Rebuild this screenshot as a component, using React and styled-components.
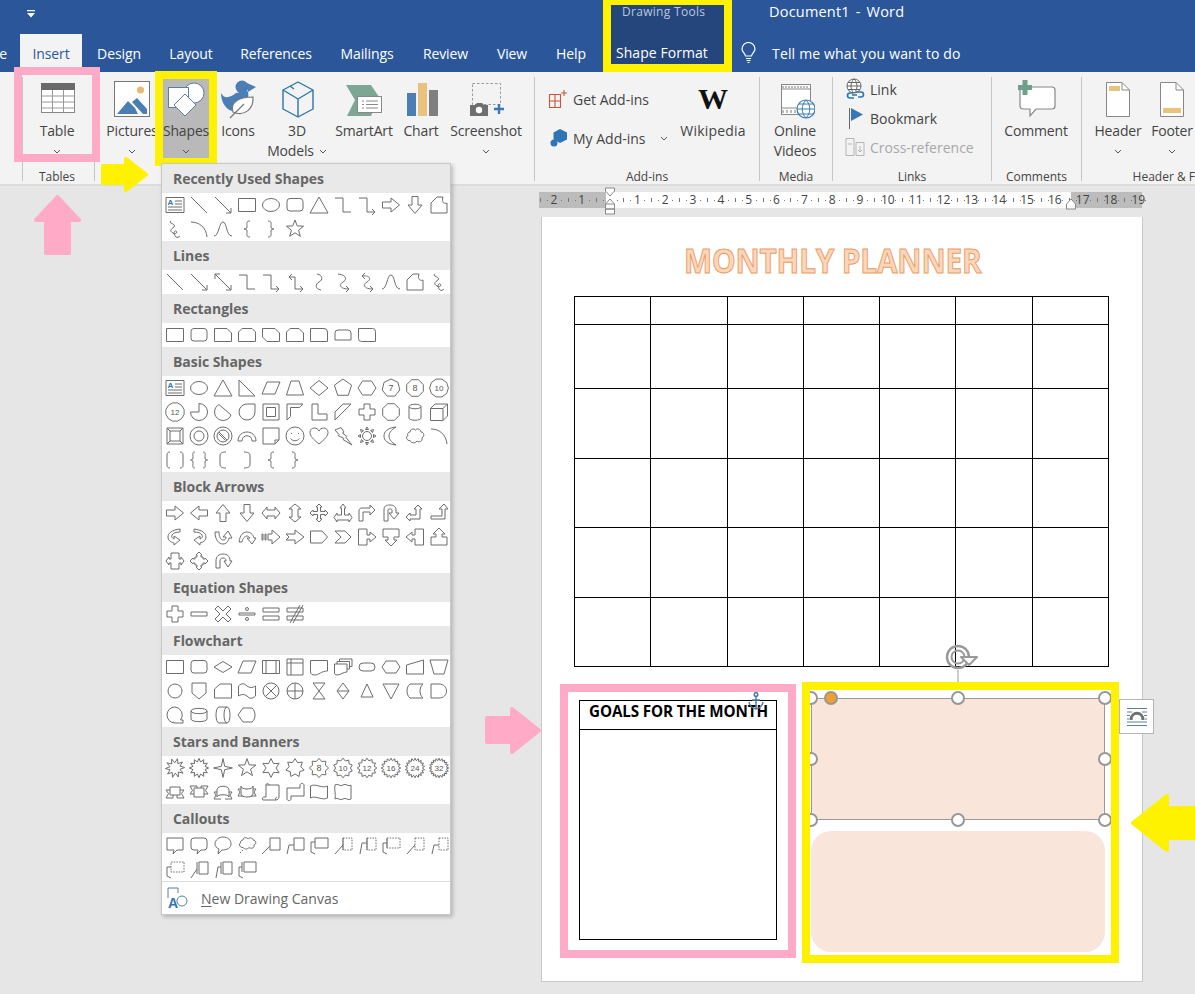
import React from "react";
import styled, { createGlobalStyle } from "styled-components";

const FONT = `"Open Sans", "Noto Sans", "Liberation Sans", sans-serif`;
const YELLOW = "#fff200";
const PINK = "#ffabc7";

const GlobalStyle = createGlobalStyle`
  html, body { margin: 0; padding: 0; background: #e6e6e6; }
  body { font-family: ${FONT}; }
`;

/* shapes gallery paths, all in a 20x20 box */
const poly = (n, r = 8.5, rot = -90) => {
  const pts = [];
  for (let i = 0; i < n; i++) {
    const a = ((rot + (360 / n) * i) * Math.PI) / 180;
    pts.push(`${(10 + r * Math.cos(a)).toFixed(1)} ${(10 + r * Math.sin(a)).toFixed(1)}`);
  }
  return `M${pts.join("L")}Z`;
};
const burst = (n, R = 9, r = 5.5, rot = -90) => {
  const pts = [];
  for (let i = 0; i < n * 2; i++) {
    const a = ((rot + (180 / n) * i) * Math.PI) / 180;
    const q = i % 2 ? r : R;
    pts.push(`${(10 + q * Math.cos(a)).toFixed(1)} ${(10 + q * Math.sin(a)).toFixed(1)}`);
  }
  return `M${pts.join("L")}Z`;
};

const S = {
  textbox: { d: "M1 2.5H19V17.5H1ZM10 6H17M10 9H17M3 12H17M3 15H17", t: "A", blue: true },
  line: "M2 2L18 18",
  arrow: "M2 2L18 18M18 18V13M18 18H13",
  darrow: "M2 2L18 18M18 18V13M18 18H13M2 2V7M2 2H7",
  rect: "M1.5 3.5H18.5V16.5H1.5Z",
  round: "M5 3.5H15a3 3 0 0 1 3 3V13a3 3 0 0 1-3 3H5a3 3 0 0 1-3-3V6.5a3 3 0 0 1 3-3Z",
  ellipse: "M1.5 10a8.5 6.5 0 1 0 17 0a8.5 6.5 0 1 0-17 0Z",
  tri: "M10 2L19 18H1Z",
  elbow: "M2 3H10V17H18",
  elbowA: "M2 3H10V17H18M18 17l-3-3M18 17l-3 3",
  elbowD: "M4 5H10V17H18M18 17l-3-3M18 17l-3 3M4 5l3-3M4 5l3 3",
  right: "M1.5 7H10V3L18.5 10L10 17V13H1.5Z",
  left: "M18.5 7H10V3L1.5 10L10 17V13H18.5Z",
  up: "M7 18.5V10H3L10 1.5L17 10H13V18.5Z",
  down: "M7 1.5H13V10H17L10 18.5L3 10H7Z",
  free: "M2 18V8L8 2H14C12 8 16 9 18 8V18Z",
  scrib: "M6 2C2 4 12 5 9 8C6 10 4 12 8 14C11 16 13 13 11 12C9 11 8 15 11 18C12 19 14 18 15 17",
  arc: "M2 3C10 3 17 8 18 18",
  curve: "M1 17C6 17 6 3 10 3C14 3 13 17 19 17",
  lbrace: "M13 2C9 2 10 4 10 8C10 10 8 10 7 10C8 10 10 10 10 12C10 16 9 18 13 18",
  rbrace: "M7 2C11 2 10 4 10 8C10 10 12 10 13 10C12 10 10 10 10 12C10 16 11 18 7 18",
  star: burst(5, 9, 3.8),
  curveC: "M8 2C14 3 14 8 10 10C6 12 6 17 12 18",
  curveCA: "M5 2C14 3 14 8 10 10C6 12 6 17 16 17M16 17l-3-3M16 17l-3 3",
  curveCD: "M5 4C14 3 14 8 10 10C6 12 6 17 16 17M16 17l-3-3M16 17l-3 3M5 4l3-3M5 4l3 3",
  snip1: "M1.5 3.5H14L18.5 8V16.5H1.5Z",
  snip2: "M5 3.5H15L18.5 7V16.5H1.5V7Z",
  snip3: "M1.5 3.5H14L18.5 8V16.5H6L1.5 12Z",
  snipr: "M5 3.5H14L18.5 8V16.5H1.5V7Z",
  rnd1: "M1.5 3.5H15a3.5 3.5 0 0 1 3.5 3.5V16.5H1.5Z",
  rnd2: "M5 5H15a3 3 0 0 1 3 3V15H2V8a3 3 0 0 1 3-3Z",
  rnd3: "M1.5 3.5H15.5a3 3 0 0 1 3 3V16.5H4.5a3 3 0 0 1-3-3Z",
  rtri: "M2 2L18 18H2Z",
  para: "M6 4H19L14 16H1Z",
  trap: "M6 3H14L18.5 17H1.5Z",
  dia: "M10 2.5L19 10L10 17.5L1 10Z",
  hex: "M5.5 3H14.5L19 10L14.5 17H5.5L1 10Z",
  pie: "M10 10V1.5a8.5 8.5 0 1 1-8.5 8.5Z",
  chord: "M6 2.5A8.5 8.5 0 1 0 18 13Z",
  drop: "M18 2V10a8 8 0 1 1-8-8Z",
  frame: "M2 2H18V18H2ZM5.5 5.5V14.5H14.5V5.5Z",
  half: "M2 2H18L14.5 5.5H5.5V14.5L2 18Z",
  ell: "M3 2H9V12H18V18H3Z",
  stripe: "M2 18V10L10 2H18Z",
  cross: "M7 2H13V7H18V13H13V18H7V13H2V7H7Z",
  can: "M4 4.5C4 1.5 16 1.5 16 4.5V16C16 19 4 19 4 16ZM4 4.5C4 7.5 16 7.5 16 4.5",
  cube: "M1.5 6.5L6 2H18.5V14L14 18.5H1.5ZM1.5 6.5H14V18.5M14 6.5L18.5 2",
  bevel: "M2 2H18V18H2ZM5 5H15V15H5ZM2 2L5 5M18 2L15 5M2 18L5 15M18 18L15 15",
  donut: "M1 10a9 9 0 1 0 18 0a9 9 0 1 0-18 0ZM5 10a5 5 0 1 0 10 0a5 5 0 1 0-10 0Z",
  nosym: "M1 10a9 9 0 1 0 18 0a9 9 0 1 0-18 0ZM4 10a6 6 0 1 0 12 0a6 6 0 1 0-12 0ZM6 6L14 14M5.5 7.5L12.5 14.5",
  barc: "M1 15C1 3 19 3 19 15H15C15 8 5 8 5 15Z",
  fold: "M2 2H18V14L14 18H2ZM18 14L14 14V18",
  smile: "M1 10a9 9 0 1 0 18 0a9 9 0 1 0-18 0ZM6 7.5h1M13 7.5h1M5.5 12.5C8 15.5 12 15.5 14.5 12.5",
  heart: "M10 18C4 13 1 10 1 6.5C1 3.5 3 2 5.5 2C7.5 2 9 3 10 5C11 3 12.5 2 14.5 2C17 2 19 3.5 19 6.5C19 10 16 13 10 18Z",
  bolt: "M2 4L8 1.5L11 6L9.5 7L14 10.5L13 11.5L19 19L10 13.5L11 12.5L5 9.5L6 8.5Z",
  sun: "M5.5 10a4.5 4.5 0 1 0 9 0a4.5 4.5 0 1 0-9 0ZM10 1L8.5 3.5H11.5ZM10 19L8.5 16.5H11.5ZM1 10L3.5 8.5V11.5ZM19 10L16.5 8.5V11.5ZM3.5 3.5L6.5 4.5L4.5 6.5ZM16.5 3.5L13.5 4.5L15.5 6.5ZM3.5 16.5L6.5 15.5L4.5 13.5ZM16.5 16.5L13.5 15.5L15.5 13.5Z",
  moon: "M15 1C6 2 3 6 3 10C3 14 6 18 15 19C10 16 8 13 8 10C8 7 10 4 15 1Z",
  cloud: "M5 6C5 3 9 2 10.5 4C12 2 16 3 16 6C19 6 20 10 17 12C18 15 14 17 12 15C10 18 6 17 5 14.5C2 15 0 11 3 9.5C2 8 3 6 5 6Z",
  dbrk: "M5 2C3 2 2 3 2 5V15C2 17 3 18 5 18M15 2C17 2 18 3 18 5V15C18 17 17 18 15 18",
  dbrc: "M6 2C3 2 4 4 4 8C4 10 2 10 1.5 10C2 10 4 10 4 12C4 16 3 18 6 18M14 2C17 2 16 4 16 8C16 10 18 10 18.5 10C18 10 16 10 16 12C16 16 17 18 14 18",
  lbrk: "M13 2C9 2 7 3 7 6V14C7 17 9 18 13 18",
  rbrk: "M7 2C11 2 13 3 13 6V14C13 17 11 18 7 18",
  lr: "M1 10L6 4V7H14V4L19 10L14 16V13H6V16Z",
  ud: "M10 1L16 6H13V14H16L10 19L4 14H7V6H4Z",
  quad: "M10 1L13 4H11.5V8.5H16V7L19 10L16 13V11.5H11.5V16H13L10 19L7 16H8.5V11.5H4V13L1 10L4 7V8.5H8.5V4H7Z",
  lru: "M10 1L13 5H11.5V12H16V10L19 14.5L16 19V17H4V19L1 14.5L4 10V12H8.5V5H7Z",
  bent: "M2 18V8C2 6 3 5 5 5H13V2L18 7L13 12V9H6V18Z",
  uturn: "M3 18V7C3 3 5 2 9 2C13 2 15 4 15 7V10H18L13 16L8 10H11V7C11 6 10 6 9 6C8 6 7 6 7 7V18Z",
  leftup: "M1 14L5 10V12H11V6H9L13 2L17 6H15V16H5V18Z",
  bentup: "M2 13H13V6H10L15 1L19 6H16V16H2Z",
  curveR: "M15 2C7 3 3 6 3 10C3 13 5 15 9 16V18L15 13L9 9V12C7 11 6 10 7 8C8 6 11 5 15 5Z",
  curveL: "M5 2C13 3 17 6 17 10C17 13 15 15 11 16V18L5 13L11 9V12C13 11 14 10 13 8C12 6 9 5 5 5Z",
  curveU: "M2 5C2 13 6 17 10 17C13 17 15 15 16 11H19L15 4L10 10H13C13 12 12 13 10 13C8 13 6 10 6 5Z",
  curveD: "M2 15C3 8 6 5 10 5C13 5 16 7 17 11H19L15 17L10 11H13C12 10 11 9 10 9C8 9 6 11 5 15Z",
  striped: "M1 7H2V13H1ZM4 7H5V13H4ZM7 7H11V3L19 10L11 17V13H7Z",
  notch: "M1 7H10V3L19 10L10 17V13H1L4 10Z",
  pent: "M1.5 4H13L18.5 10L13 16H1.5Z",
  chev: "M2 4H12L18 10L12 16H2L8 10Z",
  rcall: "M1.5 2H10V8H13V5L19 10L13 15V12H10V18H1.5Z",
  dcall: "M2 2H18V10H13V13H16L10 19L4 13H7V10H2Z",
  lcall: "M18.5 2H10V8H7V5L1 10L7 15V12H10V18H18.5Z",
  ucall: "M2 18H18V10H13V7H16L10 1L4 7H7V10H2Z",
  lrcall: "M6 2H14V8H16V6L19 10L16 14V12H14V18H6V12H4V14L1 10L4 6V8H6Z",
  qcall: "M6 6H8V4H7L10 1L13 4H12V6H14V8H16V7L19 10L16 13V12H14V14H12V16H13L10 19L7 16H8V14H6V12H4V13L1 10L4 7V8H6Z",
  circ: "M3 17V10C3 5 6 3 10 3C14 3 17 5 17 10H19L15 16L11 10H13C13 8 12 7 10 7C8 7 7 8 7 10V17Z",
  minus: "M2 8H18V12H2Z",
  times: "M5 2L10 7L15 2L18 5L13 10L18 15L15 18L10 13L5 18L2 15L7 10L2 5Z",
  divide: "M2 9H18V11H2ZM8.5 5a1.5 1.5 0 1 0 3 0a1.5 1.5 0 1 0-3 0ZM8.5 15a1.5 1.5 0 1 0 3 0a1.5 1.5 0 1 0-3 0Z",
  equal: "M2 4H18V8H2ZM2 12H18V16H2Z",
  noteq: "M2 4H18V8H2ZM2 12H18V16H2ZM15 1L5 19M18 1L8 19",
  fdec: "M1 10L10 4.5L19 10L10 15.5Z",
  fpre: "M1.5 3.5H18.5V16.5H1.5ZM5 3.5V16.5M15 3.5V16.5",
  fint: "M2 2H18V18H2ZM6 2V18M2 6H18",
  fdoc: "M1.5 3.5H18.5V14C12 14 10 18 6 18C3 18 1.5 17 1.5 15Z",
  fmul: "M1.5 7H14V15C10 15 8 18 4 18C2.5 18 1.5 17 1.5 16ZM4 7V4.5H16.5V12H14M6.5 4.5V2H19V9.5H16.5",
  fter: "M6 6H14a4 4 0 0 1 0 8H6a4 4 0 0 1 0-8Z",
  fprep: "M5 4H15L19 10L15 16H5L1 10Z",
  fman: "M1.5 8L18.5 3V17H1.5Z",
  fop: "M1 3H19L15 17H5Z",
  fcon: "M3 10a7 7 0 1 0 14 0a7 7 0 1 0-14 0Z",
  foff: "M3 2H17V12L10 18L3 12Z",
  fcard: "M7 3H18.5V17H1.5V8Z",
  ftape: "M1.5 5C5 2 7 2 10 5C13 7 15 7 18.5 5V15C15 18 13 18 10 15C7 13 5 13 1.5 15Z",
  fsum: "M2 10a8 8 0 1 0 16 0a8 8 0 1 0-16 0ZM4.5 4.5L15.5 15.5M15.5 4.5L4.5 15.5",
  for: "M2 10a8 8 0 1 0 16 0a8 8 0 1 0-16 0ZM10 2V18M2 10H18",
  fcol: "M4 2H16L4 18H16Z",
  fsort: "M10 2L16 10L10 18L4 10ZM4 10H16",
  fext: "M10 3L16 16H4Z",
  fmer: "M2 3H18L10 18Z",
  fsto: "M5 3H18C14 6 14 14 18 17H5C1 14 1 6 5 3Z",
  fdel: "M2 3H10C20 3 20 17 10 17H2Z",
  fseq: "M10 2a8 8 0 1 0 0 16H18V15H15.5A8 8 0 0 0 10 2Z",
  fmag: "M2 6C2 2.5 18 2.5 18 6V14C18 17.5 2 17.5 2 14ZM2 6C2 9.5 18 9.5 18 6",
  fdir: "M6 2H14C18 2 18 18 14 18H6C2 18 2 2 6 2ZM14 2C10 2 10 18 14 18",
  fdis: "M6 3H15C19 6 19 14 15 17H6L1 10Z",
  rib1: "M5 5H15V13H5ZM5 8H1L3.5 11.5L1 16H8V13M15 8H19L16.5 11.5L19 16H12V13",
  rib2: "M5 6H15V15H5ZM5 12H1L3.5 8.5L1 4H8V6M15 12H19L16.5 8.5L19 4H12V6",
  rib3: "M4 8C4 3 16 3 16 8V15C16 12 4 12 4 15ZM4 10H1L3 13L1 17H8M16 10H19L17 13L19 17H12",
  rib4: "M4 4C4 8 16 8 16 4V12C16 16 4 16 4 12ZM4 7H1L3 10L1 14H6M16 7H19L17 10L19 14H14",
  scrV: "M5 3H18V15C18 17 16 18 15 18H2C1 18 1 15 3 15H5ZM5 3C5 1 8 1 8 3V3M15 18C14 17 15 15 16 15",
  scrH: "M2 6H15V3C15 1 19 1 19 3V14H6V17C6 19 2 19 2 17Z",
  wave: "M1.5 4C7 1 13 7 18.5 4V16C13 19 7 13 1.5 16Z",
  dwave: "M2 3C5 1 7 5 10 3C13 1 15 5 18 3L18 17C15 19 13 15 10 17C7 19 5 15 2 17C3 12 1 8 2 3Z",
  cRect: "M2 3H18V15H12L8 19L9 15H2Z",
  cRnd: "M5 3H15a3 3 0 0 1 3 3V12a3 3 0 0 1-3 3H12L8 19L9 15H5a3 3 0 0 1-3-3V6a3 3 0 0 1 3-3Z",
  cOval: "M2 9C2 5 6 2 10 2C15 2 18 5 18 9C18 13 14 15 9 15L5 19L6 14C3.5 13 2 11 2 9Z",
  cCloud: "M6 5C6 2 10 2 11 4C13 2 16 3 16 5C19 5 20 9 17 10C18 13 14 14 12 12.5C10 15 7 14 6 12.5C3 13 1 9 3.5 8C3 6 5 5 6 5ZM5 15.5h1M3 17.5h1",
  l1: "M9 3H19V15H9ZM9 11L1 19",
  l2: "M9 3H19V15H9ZM9 10H4L2 19",
  l3: "M6 3H19V13H6ZM2 7H6M2 7V17L6 19",
  a1: { d: "M10 10L2 19M10 3V15", dash: "M10 3H19V15H10Z" },
  a2: { d: "M10 8H5L3 19M10 3V15", dash: "M10 3H19V15H10Z" },
  a3: { d: "M6 3V13M2 8H6M2 8V17L6 19", dash: "M6 3H19V13H6Z" },
  b1: { d: "M10 10L2 19", dash: "M10 3H19V15H10Z" },
  b2: { d: "M10 10H5L3 19", dash: "M10 3H19V15H10Z" },
  b3: { d: "M6 8H2V17L6 19", dash: "M6 3H19V13H6Z" },
  c1: "M10 3H19V15H10ZM8 3V15M8 10L2 19",
  c2: "M10 3H19V15H10ZM8 3V15M8 8H5L3 19",
  c3: "M7 3H19V13H7ZM5 3V13M5 8H2V17L6 19",
};

const withNum = (d, t) => ({ d, t });
const poly7 = withNum(poly(7, 9), "7");
const poly8 = withNum(poly(8, 9, -67.5), "8");
const poly10 = withNum(poly(10, 9.4, -72), "10");
const poly12 = withNum(poly(12, 9.4, -75), "12");

const SECTIONS = [
  {
    title: "Recently Used Shapes",
    shapes: [S.textbox, S.line, S.arrow, S.rect, S.ellipse, S.round, S.tri, S.elbow, S.elbowA, S.right, S.down, S.free, S.scrib, S.arc, S.curve, S.lbrace, S.rbrace, S.star],
  },
  {
    title: "Lines",
    shapes: [S.line, S.arrow, S.darrow, S.elbow, S.elbowA, S.elbowD, S.curveC, S.curveCA, S.curveCD, S.curve, S.free, S.scrib],
  },
  {
    title: "Rectangles",
    shapes: [S.rect, S.round, S.snip1, S.snip2, S.snip3, S.snipr, S.rnd1, S.rnd2, S.rnd3],
  },
  {
    title: "Basic Shapes",
    shapes: [
      S.textbox, S.ellipse, S.tri, S.rtri, S.para, S.trap, S.dia, poly(5, 9), S.hex, poly7, poly8, poly10,
      poly12, S.pie, S.chord, S.drop, S.frame, S.half, S.ell, S.stripe, S.cross, poly(8, 9, -67.5), S.can, S.cube,
      S.bevel, S.donut, S.nosym, S.barc, S.fold, S.smile, S.heart, S.bolt, S.sun, S.moon, S.cloud, S.arc,
      S.dbrk, S.dbrc, S.lbrk, S.rbrk, S.lbrace, S.rbrace,
    ],
  },
  {
    title: "Block Arrows",
    shapes: [
      S.right, S.left, S.up, S.down, S.lr, S.ud, S.quad, S.lru, S.bent, S.uturn, S.leftup, S.bentup,
      S.curveR, S.curveL, S.curveU, S.curveD, S.striped, S.notch, S.pent, S.chev, S.rcall, S.dcall, S.lcall, S.ucall,
      S.lrcall, S.qcall, S.circ,
    ],
  },
  {
    title: "Equation Shapes",
    shapes: [S.cross, S.minus, S.times, S.divide, S.equal, S.noteq],
  },
  {
    title: "Flowchart",
    shapes: [
      S.rect, S.round, S.fdec, S.para, S.fpre, S.fint, S.fdoc, S.fmul, S.fter, S.fprep, S.fman, S.fop,
      S.fcon, S.foff, S.fcard, S.ftape, S.fsum, S.for, S.fcol, S.fsort, S.fext, S.fmer, S.fsto, S.fdel,
      S.fseq, S.fmag, S.fdir, S.fdis,
    ],
  },
  {
    title: "Stars and Banners",
    shapes: [
      burst(10, 9.6, 5.2, -75), burst(12, 9.6, 6.2), burst(4, 9.4, 2.4), burst(5, 9.4, 3.8), burst(6, 9.4, 5), burst(7, 9.4, 6),
      { d: burst(8, 9.6, 7), t: "8" }, { d: burst(10, 9.8, 7.4), t: "10" }, { d: burst(12, 9.8, 7.4), t: "12" }, { d: burst(16, 9.8, 7.4), t: "16" }, { d: burst(18, 9.8, 7.4), t: "24" }, { d: burst(20, 9.8, 7.4), t: "32" },
      S.rib1, S.rib2, S.rib3, S.rib4, S.scrV, S.scrH, S.wave, S.dwave,
    ],
  },
  {
    title: "Callouts",
    shapes: [S.cRect, S.cRnd, S.cOval, S.cCloud, S.l1, S.l2, S.l3, S.a1, S.a2, S.a3, S.b1, S.b2, S.b3, S.c1, S.c2, S.c3],
  },
];

const TABLE_ROWS = [28, 64, 70, 69, 70, 69];
const TABS = [
  { label: "Insert", w: 62, active: true },
  { label: "Design", w: 74 },
  { label: "Layout", w: 70 },
  { label: "References", w: 100 },
  { label: "Mailings", w: 82 },
  { label: "Review", w: 75 },
  { label: "View", w: 58 },
  { label: "Help", w: 60 },
];
const RULER = [2, 1, "", 1, 2, 3, 4, 5, 6, 7, 8, 9, 10, 11, 12, 13, 14, 15, 16, 17, 18, 19];

const Window = styled.div`
  position: relative;
  width: 1195px;
  height: 994px;
  overflow: hidden;
  display: flex;
  flex-direction: column;
  background: #e6e6e6;
  color: #444;
`;

const TitleBar = styled.header`
  height: 72px;
  flex: none;
  display: flex;
  background: #2b579a;
  color: #fff;
`;

const TitleLeft = styled.div`
  width: 603px;
  flex: none;
`;

const QuickRow = styled.div`
  height: 34px;
  display: flex;
  align-items: flex-start;
  padding: 10px 0 0 27px;
  box-sizing: border-box;
`;

const TabRow = styled.nav`
  height: 38px;
  display: flex;
`;

const Tab = styled.div`
  width: ${(p) => p.$w}px;
  display: flex;
  align-items: center;
  justify-content: center;
  font-size: 14px;
  letter-spacing: -0.1px;
  white-space: nowrap;
  background: ${(p) => (p.$active ? "#f3f3f3" : "transparent")};
  color: ${(p) => (p.$active ? "#2b579a" : "#fff")};
`;

const ClippedTab = styled(Tab)`
  justify-content: flex-end;
  overflow: hidden;
  padding-right: 13px;
  box-sizing: border-box;
`;

const ContextBand = styled.div`
  width: 129px;
  height: 72px;
  flex: none;
  box-sizing: border-box;
  background: #25467d;
  border: 8px solid ${YELLOW};
  border-top-width: 5px;
  display: flex;
  flex-direction: column;
  justify-content: space-between;
`;

const ContextTitle = styled.span`
  font-size: 12px;
  line-height: 14px;
  margin-left: 11px;
  color: #b9c8de;
  white-space: nowrap;
  letter-spacing: 0.3px;
`;

const ContextTab = styled.span`
  font-size: 14px;
  line-height: 19px;
  margin: 0 0 2px 5px;
  white-space: nowrap;
  letter-spacing: 0.05px;
`;

const TitleRight = styled.div`
  flex: 1;
  display: flex;
  flex-direction: column;
`;

const DocTitle = styled.div`
  height: 34px;
  box-sizing: border-box;
  padding: 2px 0 0 37px;
  font-size: 14.5px;
  line-height: 20px;
  letter-spacing: 0.2px;
  word-spacing: 2px;
`;

const TellMe = styled.div`
  height: 38px;
  display: flex;
  align-items: center;
  gap: 16px;
  padding-left: 9px;
  font-size: 14px;
  letter-spacing: 0.17px;
`;

const Ribbon = styled.section`
  height: 114px;
  flex: none;
  box-sizing: border-box;
  display: flex;
  padding: 5px 0 0 22px;
  background: #f3f3f3;
  border-bottom: 2px solid #dcdcdc;
  overflow: hidden;
`;

const Group = styled.div`
  width: ${(p) => p.$w}px;
  height: 104px;
  flex: none;
  box-sizing: border-box;
  display: flex;
  flex-direction: column;
  border-right: 1px solid #c6c6c6;
  ${(p) => p.$first && "border-left: 1px solid #c6c6c6;"}
  ${(p) => p.$last && "border-right: 0;"}
`;

const GroupBody = styled.div`
  flex: 1;
  display: flex;
  padding: ${(p) => p.$pad || "0"};
`;

const GroupLabel = styled.div`
  height: 10px;
  line-height: 12px;
  text-align: center;
  font-size: 12px;
  color: #444;
  white-space: nowrap;
  padding-right: ${(p) => p.$shift || 0}px;
`;

const BigButton = styled.div`
  width: ${(p) => p.$w}px;
  flex: none;
  display: flex;
  flex-direction: column;
  align-items: center;
  font-size: 14px;
  line-height: 20px;
  letter-spacing: ${(p) => p.$spacing ?? -0.15}px;
  white-space: nowrap;
  ${(p) => p.$pressed && "background: linear-gradient(#b9b9b9, #b9b9b9) 2px 2px / 46px 79px no-repeat;"}
  svg.big {
    display: block;
    margin: 2px 0;
    flex: none;
  }
`;

const ChevronLine = styled.span`
  height: 20px;
  display: flex;
  align-items: center;
  gap: 5px;
`;

const SmallColumn = styled.div`
  display: flex;
  flex-direction: column;
  gap: ${(p) => p.$gap}px;
  padding: ${(p) => p.$pad};
  width: ${(p) => p.$w}px;
  box-sizing: border-box;
  flex: none;
`;

const SmallButton = styled.div`
  height: 24px;
  display: flex;
  align-items: center;
  gap: 5px;
  font-size: 14px;
  white-space: nowrap;
  color: ${(p) => (p.$disabled ? "#a8a8a8" : "#444")};
`;

const SplitChevron = styled.span`
  display: flex;
  margin-left: 9px;
`;

const WikiMark = styled.span`
  height: 44px;
  display: flex;
  align-items: center;
  font-family: "Liberation Serif", serif;
  font-weight: 700;
  font-size: 30px;
  color: #111;
`;

const Workspace = styled.main`
  flex: 1;
  position: relative;
  display: flex;
  flex-direction: column;
`;

const Ruler = styled.div`
  width: 603px;
  height: 16px;
  flex: none;
  margin: 6px 0 0 539px;
  padding-left: 1px;
  box-sizing: border-box;
  display: flex;
  position: relative;
  background: linear-gradient(to right, #bcbcbc 67px, #fff 67px, #fff 532px, #bcbcbc 532px);
`;

const RulerCell = styled.span`
  flex: 0 0 27.83px;
  position: relative;
  text-align: center;
  font-size: 12px;
  line-height: 16px;
  color: #444;
  &::before {
    content: "";
    position: absolute;
    left: 0;
    top: 6px;
    width: 1px;
    height: 4px;
    background: #777;
  }
  &::after {
    content: "";
    position: absolute;
    left: 7px;
    top: 8px;
    width: 1px;
    height: 1px;
    background: #777;
    box-shadow: 14px 0 #777;
  }
`;

const RulerMarks = styled.svg`
  position: absolute;
  left: 0;
  top: -4px;
  overflow: visible;
`;

const DocPage = styled.div`
  width: 602px;
  height: 765px;
  flex: none;
  box-sizing: border-box;
  margin: 9px 0 0 541px;
  position: relative;
  background: #fff;
  border: 1px solid #c9c9c9;
  border-width: 0 1px 1px 1px;
  display: flex;
  flex-direction: column;
`;

const PlannerTitle = styled.h1`
  margin: 27px 0 0 142px;
  width: 298px;
  height: 33px;
  font-size: 34px;
  line-height: 33px;
  font-weight: 700;
  letter-spacing: -0.2px;
  white-space: nowrap;
  color: #fbd6bb;
  -webkit-text-stroke: 1px #ea9c64;
  transform: scaleX(0.876);
  transform-origin: left center;
`;

const Calendar = styled.table`
  margin: 19px 0 0 32px;
  width: 535px;
  flex: none;
  border-collapse: collapse;
  table-layout: fixed;
  td {
    border: 1px solid #000;
    padding: 0;
  }
`;

const CalendarRow = styled.tr`
  height: ${(p) => p.$h}px;
`;

const BottomRow = styled.div`
  display: flex;
  margin: 15px 0 0 18px;
  position: relative;
  align-items: flex-start;
`;

const PinkFrame = styled.div`
  width: 236px;
  height: 274px;
  flex: none;
  box-sizing: border-box;
  margin-top: 2px;
  padding: 8px 11px 0;
  border: 8px solid ${PINK};
  position: relative;
`;

const GoalsTable = styled.div`
  width: 198px;
  height: 240px;
  box-sizing: border-box;
  border: 1px solid #000;
  display: flex;
  flex-direction: column;
`;

const GoalsHead = styled.div`
  height: 29px;
  box-sizing: border-box;
  border-bottom: 1px solid #000;
  font-size: 15.2px;
  font-weight: 700;
  line-height: 21px;
  letter-spacing: -0.1px;
  white-space: nowrap;
  color: #000;
  padding-left: 9px;
`;

const AnchorMark = styled.svg`
  position: absolute;
  left: 180px;
  top: 0;
`;

const YellowFrame = styled.div`
  width: 317px;
  height: 281px;
  flex: none;
  box-sizing: border-box;
  margin-left: 6px;
  padding: 8px 0 0 1px;
  border: 8px solid ${YELLOW};
  overflow: hidden;
  position: relative;
  display: flex;
  flex-direction: column;
  gap: 11px;
`;

const PeachShape = styled.div`
  width: 294px;
  height: ${(p) => p.$h}px;
  flex: none;
  background: #f9e5d9;
  border-radius: ${(p) => p.$r}px;
  position: relative;
`;

const SelectionBox = styled.div`
  position: absolute;
  inset: 0;
  border: 1px solid #999;
`;

const Handle = styled.span`
  position: absolute;
  left: ${(p) => p.$x}%;
  top: ${(p) => p.$y}%;
  width: 14px;
  height: 14px;
  margin: -7px 0 0 -7px;
  box-sizing: border-box;
  border-radius: 50%;
  border: 2.5px solid #979797;
  background: #fff;
`;

const AdjustHandle = styled(Handle)`
  left: 20px;
  background: #f0a030;
`;

const RotateHandle = styled.svg`
  position: absolute;
  left: 386px;
  top: -38px;
  overflow: visible;
`;

const WrapButton = styled.div`
  width: 35px;
  height: 35px;
  flex: none;
  box-sizing: border-box;
  margin-top: 17px;
  background: #fff;
  border: 1px solid #b5b5b5;
  display: flex;
  align-items: center;
  justify-content: center;
`;

/* the Shapes dropdown lies over the ribbon and the document */
const ShapeMenu = styled.div`
  position: absolute;
  left: 161px;
  top: 163px;
  width: 290px;
  box-sizing: border-box;
  background: #fff;
  border: 1px solid #c8c8c8;
  box-shadow: 2px 2px 4px rgba(0, 0, 0, 0.22);
  z-index: 5;
`;

const MenuHeader = styled.div`
  height: 29px;
  box-sizing: border-box;
  padding-left: 11px;
  background: #e9e9e9;
  font-size: 14px;
  font-weight: 700;
  line-height: 30px;
  letter-spacing: -0.05px;
  color: #666;
  white-space: nowrap;
`;

const ShapeGrid = styled.div`
  display: grid;
  grid-template-columns: repeat(12, 24px);
  grid-auto-rows: 24px;
  padding-left: 1px;
`;

const ShapeCell = styled.svg`
  display: block;
  margin: 2px;
  fill: none;
  stroke: #6d6d6d;
  stroke-width: 1;
  text {
    stroke: none;
    fill: #555;
    font-family: "Liberation Sans", sans-serif;
    text-anchor: middle;
  }
`;

const MenuFooter = styled.div`
  height: 33px;
  box-sizing: border-box;
  border-top: 1px solid #dcdcdc;
  display: flex;
  align-items: center;
  gap: 13px;
  padding-left: 4px;
  font-size: 14px;
  color: #666;
  u {
    text-underline-offset: 2px;
  }
`;

/* annotations drawn on top of the screenshot */
const Outline = styled.div`
  position: absolute;
  left: ${(p) => p.$x}px;
  top: ${(p) => p.$y}px;
  width: ${(p) => p.$w}px;
  height: ${(p) => p.$h}px;
  box-sizing: border-box;
  border: 8px solid ${(p) => p.$color};
  z-index: 3;
`;

const ArrowMark = styled.svg`
  position: absolute;
  left: ${(p) => p.$x}px;
  top: ${(p) => p.$y}px;
  z-index: 4;
`;

const Chevron = () => (
  <svg width="8" height="5" viewBox="0 0 8 5" fill="none" stroke="#555" strokeWidth="1">
    <path d="M1 1L4 4L7 1" />
  </svg>
);

const BigIcon = ({ children, w = 40 }) => (
  <svg className="big" width={w} height="40" viewBox={`0 0 ${w} 40`}>
    {children}
  </svg>
);

const GalleryShape = ({ shape }) => {
  const s = typeof shape === "string" ? { d: shape } : shape;
  return (
    <ShapeCell width="20" height="20" viewBox="0 0 20 20">
      {s.d && <path d={s.d} />}
      {s.dash && <path d={s.dash} strokeDasharray="1.5 1.2" />}
      {s.blue && (
        <text x="5.5" y="10" fontSize="8" fontWeight="700" style={{ fill: "#2f75b5" }}>
          {s.t}
        </text>
      )}
      {!s.blue && s.t && (
        <text x="10" y="13" fontSize={s.t.length > 1 ? 8 : 9}>
          {s.t}
        </text>
      )}
    </ShapeCell>
  );
};

const HANDLES = [
  [0, 0], [50, 0], [100, 0],
  [0, 50], [100, 50],
  [0, 100], [50, 100], [100, 100],
];

export default function App() {
  return (
    <Window>
      <GlobalStyle />
      <TitleBar>
        <TitleLeft>
          <QuickRow>
            <svg width="9" height="9" viewBox="0 0 9 9" fill="#fff">
              <path d="M0 0H8V1.3H0ZM0 3H8L4 7.5Z" />
            </svg>
          </QuickRow>
          <TabRow>
            <ClippedTab $w={20}>Home</ClippedTab>
            {TABS.map((t) => (
              <Tab key={t.label} $w={t.w} $active={t.active}>
                {t.label}
              </Tab>
            ))}
          </TabRow>
        </TitleLeft>
        <ContextBand>
          <ContextTitle>Drawing Tools</ContextTitle>
          <ContextTab>Shape Format</ContextTab>
        </ContextBand>
        <TitleRight>
          <DocTitle>Document1 - Word</DocTitle>
          <TellMe>
            <svg width="15" height="22" viewBox="0 0 15 22" fill="none" stroke="#fff" strokeWidth="1.2">
              <path d="M4.5 14C4 11 1 10 1 7a6.5 6.5 0 0 1 13 0C14 10 11 11 10.5 14ZM5 16.5H10M5.5 18.5H9.5M6.5 20.5H8.5" />
            </svg>
            Tell me what you want to do
          </TellMe>
        </TitleRight>
      </TitleBar>

      <Ribbon>
        <Group $w={73} $first>
          <GroupBody>
            <BigButton $w={68}>
              <BigIcon>
                <rect x="4.5" y="4.5" width="33" height="29" fill="#fff" stroke="#888" />
                <rect x="4" y="4" width="34" height="7" fill="#6a6a6a" />
                <path d="M4.5 17H37.5M4.5 23H37.5M4.5 29H37.5M15.5 11V33M26.5 11V33" stroke="#999" fill="none" />
              </BigIcon>
              Table
              <ChevronLine>
                <Chevron />
              </ChevronLine>
            </BigButton>
          </GroupBody>
          <GroupLabel $shift={3}>Tables</GroupLabel>
        </Group>

        <Group $w={440}>
          <GroupBody $pad="0 0 0 8px">
            <BigButton $w={58}>
              <BigIcon>
                <rect x="2.5" y="2.5" width="35" height="35" fill="#fff" stroke="#777" />
                <circle cx="28.5" cy="11" r="3.5" fill="#e9b872" />
                <path d="M5 35L16 22L23 29L26 35ZM20 23L25 19L35 30V35H31Z" fill="#4a7eb5" />
              </BigIcon>
              Pictures
              <ChevronLine>
                <Chevron />
              </ChevronLine>
            </BigButton>
            <BigButton $w={50} $pressed>
              <BigIcon>
                <circle cx="28" cy="14" r="10" fill="#fff" stroke="#5f7f9f" />
                <rect x="2.5" y="8.5" width="20" height="20" fill="#fff" stroke="#5f7f9f" />
                <path d="M19 15L30 26L19 37L8 26Z" fill="#fff" stroke="#5f7f9f" />
              </BigIcon>
              Shapes
              <ChevronLine>
                <Chevron />
              </ChevronLine>
            </BigButton>
            <BigButton $w={54}>
              <BigIcon>
                <circle cx="24" cy="8" r="6.5" fill="#4a7eb5" />
                <path d="M29 4L38 8L30 13ZM3 14C6 20 12 19 18 14L30 12C32 25 25 33 14 32C7 30 3 22 3 14Z" fill="#4a7eb5" />
                <path d="M15 33C12 24 20 18 35 18C36 30 26 38 15 33ZM12 39L26 25" fill="#fff" stroke="#777" strokeWidth="1.2" />
              </BigIcon>
              Icons
            </BigButton>
            <BigButton $w={64}>
              <BigIcon>
                <path d="M21 3L36 11V30L21 38L6 30V11ZM6 11L21 20L36 11M21 20V38M13 7L17 10" fill="none" stroke="#2f75a8" strokeWidth="1.4" strokeLinejoin="round" />
              </BigIcon>
              3D
              <ChevronLine>
                Models
                <Chevron />
              </ChevronLine>
            </BigButton>
            <BigButton $w={70}>
              <BigIcon>
                <path d="M2 6H27L35 18L27 37H3L11 21Z" fill="#7da695" />
                <rect x="13.5" y="17.5" width="24" height="16" fill="#fff" stroke="#888" />
                <path d="M18 22H20M22 22H34M18 25.5H20M22 25.5H34M18 29H20M22 29H34" stroke="#888" />
              </BigIcon>
              SmartArt
            </BigButton>
            <BigButton $w={44}>
              <BigIcon>
                <rect x="6" y="14" width="9" height="23" fill="#4a7eb5" />
                <rect x="17" y="4" width="9" height="33" fill="#e9c27d" />
                <rect x="28" y="11" width="9" height="26" fill="#7f7f7f" />
              </BigIcon>
              Chart
            </BigButton>
            <BigButton $w={86}>
              <BigIcon>
                <rect x="6.5" y="4.5" width="28" height="21" fill="none" stroke="#999" strokeDasharray="2.5 2" />
                <path d="M4 26H9L11 24H16L18 26H22V37H4Z" fill="#6f6f6f" />
                <circle cx="13" cy="31" r="3.2" fill="#fff" />
                <path d="M28 30H38M33 25V35" stroke="#3a78b5" strokeWidth="2.4" />
              </BigIcon>
              Screenshot
              <ChevronLine>
                <Chevron />
              </ChevronLine>
            </BigButton>
          </GroupBody>
          <GroupLabel />
        </Group>

        <Group $w={225}>
          <GroupBody>
            <SmallColumn $w={144} $gap={15} $pad="10px 0 0 13px">
              <SmallButton>
                <svg width="20" height="20" viewBox="0 0 20 20" fill="none" stroke="#c8563a" strokeWidth="1.1">
                  <path d="M1.5 5.5H12.5V18.5H1.5ZM1.5 12H12.5M7 5.5V18.5M16 1V7M13 4H19" />
                </svg>
                Get Add-ins
              </SmallButton>
              <SmallButton>
                <svg width="20" height="20" viewBox="0 0 20 20" fill="#2f75b5">
                  <path d="M12 1L19 4.5V11.5L12 15L5.5 11.5V4.5Z" />
                  <circle cx="6" cy="15" r="3.5" />
                </svg>
                My Add-ins
                <SplitChevron>
                  <Chevron />
                </SplitChevron>
              </SmallButton>
            </SmallColumn>
            <BigButton $w={68} $spacing={0.2}>
              <WikiMark>W</WikiMark>
              Wikipedia
            </BigButton>
          </GroupBody>
          <GroupLabel>Add-ins</GroupLabel>
        </Group>

        <Group $w={73}>
          <GroupBody>
            <BigButton $w={70}>
              <BigIcon>
                <rect x="6.5" y="5.5" width="29" height="30" fill="#fff" stroke="#888" />
                <path d="M6.5 10H35.5M6.5 29H22" stroke="#888" />
                <path d="M8 7V9M11 7V9M14 7V9M17 7V9M20 7V9M23 7V9M26 7V9M29 7V9M32 7V9M8 31V34M12 31V34M16 31V34M20 31V34" stroke="#777" />
                <circle cx="31" cy="30" r="9" fill="#fff" stroke="#3a7ab5" strokeWidth="1.2" />
                <path d="M22 30H40M31 21C26 26 26 34 31 39M31 21C36 26 36 34 31 39M24 25H38M24 35H38" fill="none" stroke="#3a7ab5" />
              </BigIcon>
              Online
              <span>Videos</span>
            </BigButton>
          </GroupBody>
          <GroupLabel>Media</GroupLabel>
        </Group>

        <Group $w={159}>
          <GroupBody>
            <SmallColumn $w={158} $gap={5} $pad="0 0 0 12px">
              <SmallButton>
                <svg width="20" height="22" viewBox="0 0 20 22" fill="none" stroke="#666">
                  <circle cx="9" cy="8" r="7" fill="#fff" />
                  <path d="M2 8H16M9 1C5 4 5 12 9 15M9 1C13 4 13 12 9 15M3 4.5H15M3 11.5H15" />
                  <path d="M7 17H12M11 14H16a2.5 2.5 0 0 1 0 5H13M9 20H5a2.5 2.5 0 0 1 0-5H8" stroke="#2f75b5" strokeWidth="1.6" />
                </svg>
                Link
              </SmallButton>
              <SmallButton>
                <svg width="20" height="22" viewBox="0 0 20 22">
                  <path d="M4.5 1V22" stroke="#666" />
                  <path d="M6 1L18 7.5L6 14Z" fill="#3a78b5" />
                </svg>
                Bookmark
              </SmallButton>
              <SmallButton $disabled>
                <svg width="20" height="20" viewBox="0 0 20 20" fill="none" stroke="#b5b5b5">
                  <path d="M1 1.5H9V18.5H1ZM11 5.5H19V18.5H11ZM3 7H7M15 9V15M13 13L15 15L17 13" />
                </svg>
                Cross-reference
              </SmallButton>
            </SmallColumn>
          </GroupBody>
          <GroupLabel>Links</GroupLabel>
        </Group>

        <Group $w={90}>
          <GroupBody>
            <BigButton $w={88}>
              <BigIcon>
                <path d="M7 8H36a3 3 0 0 1 3 3V27a3 3 0 0 1-3 3H20L14 37V30H7a3 3 0 0 1-3-3V11Z" fill="#fff" stroke="#888" strokeWidth="1.2" />
                <path d="M9 1V16M2 8.5H16" stroke="#6fa08c" strokeWidth="5" />
              </BigIcon>
              Comment
            </BigButton>
          </GroupBody>
          <GroupLabel>Comments</GroupLabel>
        </Group>

        <Group $w={194} $last>
          <GroupBody>
            <BigButton $w={72}>
              <BigIcon>
                <path d="M8.5 3.5H24L31.5 11V37.5H8.5Z" fill="#fff" stroke="#888" />
                <path d="M24 3.5V11H31.5" fill="none" stroke="#888" />
                <rect x="11" y="7" width="11" height="5" fill="#e9c27d" />
              </BigIcon>
              Header
              <ChevronLine>
                <Chevron />
              </ChevronLine>
            </BigButton>
            <BigButton $w={36}>
              <BigIcon>
                <path d="M8.5 3.5H24L31.5 11V37.5H8.5Z" fill="#fff" stroke="#888" />
                <path d="M24 3.5V11H31.5" fill="none" stroke="#888" />
                <rect x="11" y="29" width="18" height="5" fill="#e9c27d" />
              </BigIcon>
              Footer
              <ChevronLine>
                <Chevron />
              </ChevronLine>
            </BigButton>
          </GroupBody>
          <GroupLabel>Header &amp; Footer</GroupLabel>
        </Group>
      </Ribbon>

      <Workspace>
        <Ruler>
          {RULER.map((n, i) => (
            <RulerCell key={i}>{n}</RulerCell>
          ))}
          <RulerMarks width="603" height="26" fill="#fff" stroke="#888">
            <path d="M66.5 0H75.5V3L71 8L66.5 3ZM66.5 21V16L71 11L75.5 16V21ZM66.5 16H75.5M66.5 21H75.5V26H66.5Z" />
            <path d="M527.5 21V16L532 11L536.5 16V21Z" />
          </RulerMarks>
        </Ruler>

        <DocPage>
          <PlannerTitle>MONTHLY PLANNER</PlannerTitle>
          <Calendar>
            <tbody>
              {TABLE_ROWS.map((h, r) => (
                <CalendarRow key={r} $h={h}>
                  {Array.from({ length: 7 }, (_, c) => (
                    <td key={c} />
                  ))}
                </CalendarRow>
              ))}
            </tbody>
          </Calendar>

          <BottomRow>
            <RotateHandle width="32" height="40" fill="none">
              <path d="M12 26V39" stroke="#999" />
              <circle cx="12" cy="13" r="11" stroke="#999" strokeWidth="2.4" />
              <circle cx="12" cy="13" r="6.5" stroke="#999" strokeWidth="2" />
              <path d="M15 13H31L23 21Z" fill="#fff" stroke="#999" strokeWidth="2" strokeLinejoin="round" />
            </RotateHandle>
            <PinkFrame>
              <GoalsTable>
                <GoalsHead>GOALS FOR THE MONTH</GoalsHead>
              </GoalsTable>
              <AnchorMark width="16" height="18" viewBox="0 0 16 18" fill="none" stroke="#4a7ba6" strokeWidth="1.5">
                <circle cx="8" cy="2.5" r="1.8" />
                <path d="M8 4.5V17M1 10C1.5 14 5 16.5 8 17C11 16.5 14.5 14 15 10M4 8H12" />
              </AnchorMark>
            </PinkFrame>
            <YellowFrame>
              <PeachShape $h={122} $r={14}>
                <SelectionBox />
                {HANDLES.map(([x, y]) => (
                  <Handle key={`${x}-${y}`} $x={x} $y={y} />
                ))}
                <AdjustHandle $x={0} $y={0} />
              </PeachShape>
              <PeachShape $h={121} $r={20} />
            </YellowFrame>
            <WrapButton>
              <svg width="22" height="20" viewBox="0 0 22 20" fill="none" stroke="#5d8199">
                <path d="M1 1.5H21M1 18.5H21M1 15H21M1 5H6M16 5H21M1 8.5H4M18 8.5H21M1 12H3M19 12H21" />
                <path d="M5 13C5 4 17 4 17 13" stroke="#707070" strokeWidth="3" />
              </svg>
            </WrapButton>
          </BottomRow>
        </DocPage>
      </Workspace>

      <Outline $x={14} $y={67} $w={86} $h={95} $color={PINK} />
      <Outline $x={155} $y={71} $w={62} $h={95} $color={YELLOW} />
      <ArrowMark $x={100} $y={156} width="48" height="37" viewBox="0 0 48 37" fill={YELLOW} stroke={YELLOW} strokeWidth="4" strokeLinejoin="round">
        <path d="M3 10H26V3L46 18.5L26 34V27H3Z" />
      </ArrowMark>
      <ArrowMark $x={34} $y={195} width="47" height="60" viewBox="0 0 47 60" fill={PINK} stroke={PINK} strokeWidth="4" strokeLinejoin="round">
        <path d="M23.5 2L45 25H35V58H12V25H2Z" />
      </ArrowMark>
      <ArrowMark $x={485} $y={707} width="56" height="47" viewBox="0 0 56 47" fill={PINK} stroke={PINK} strokeWidth="4" strokeLinejoin="round">
        <path d="M2 11H27V2L54 23.5L27 45V35H2Z" />
      </ArrowMark>
      <ArrowMark $x={1131} $y={794} width="64" height="58" viewBox="0 0 64 58" fill={YELLOW} stroke={YELLOW} strokeWidth="4" strokeLinejoin="round">
        <path d="M2 29L36 2V14H66V44H36V56Z" />
      </ArrowMark>

      <ShapeMenu>
        {SECTIONS.map((section) => (
          <div key={section.title}>
            <MenuHeader>{section.title}</MenuHeader>
            <ShapeGrid>
              {section.shapes.map((shape, i) => (
                <GalleryShape key={i} shape={shape} />
              ))}
            </ShapeGrid>
          </div>
        ))}
        <MenuFooter>
          <svg width="22" height="24" viewBox="0 0 22 24" fill="none" stroke="#5d7f9f">
            <path d="M2 2H12V7M2 2V12" />
            <circle cx="16" cy="15" r="5" />
            <text x="2" y="22" fontSize="14" fontWeight="700" fill="#2f75b5" stroke="none" fontFamily="Liberation Sans">
              A
            </text>
          </svg>
          <span>
            <u>N</u>ew Drawing Canvas
          </span>
        </MenuFooter>
      </ShapeMenu>
    </Window>
  );
}
